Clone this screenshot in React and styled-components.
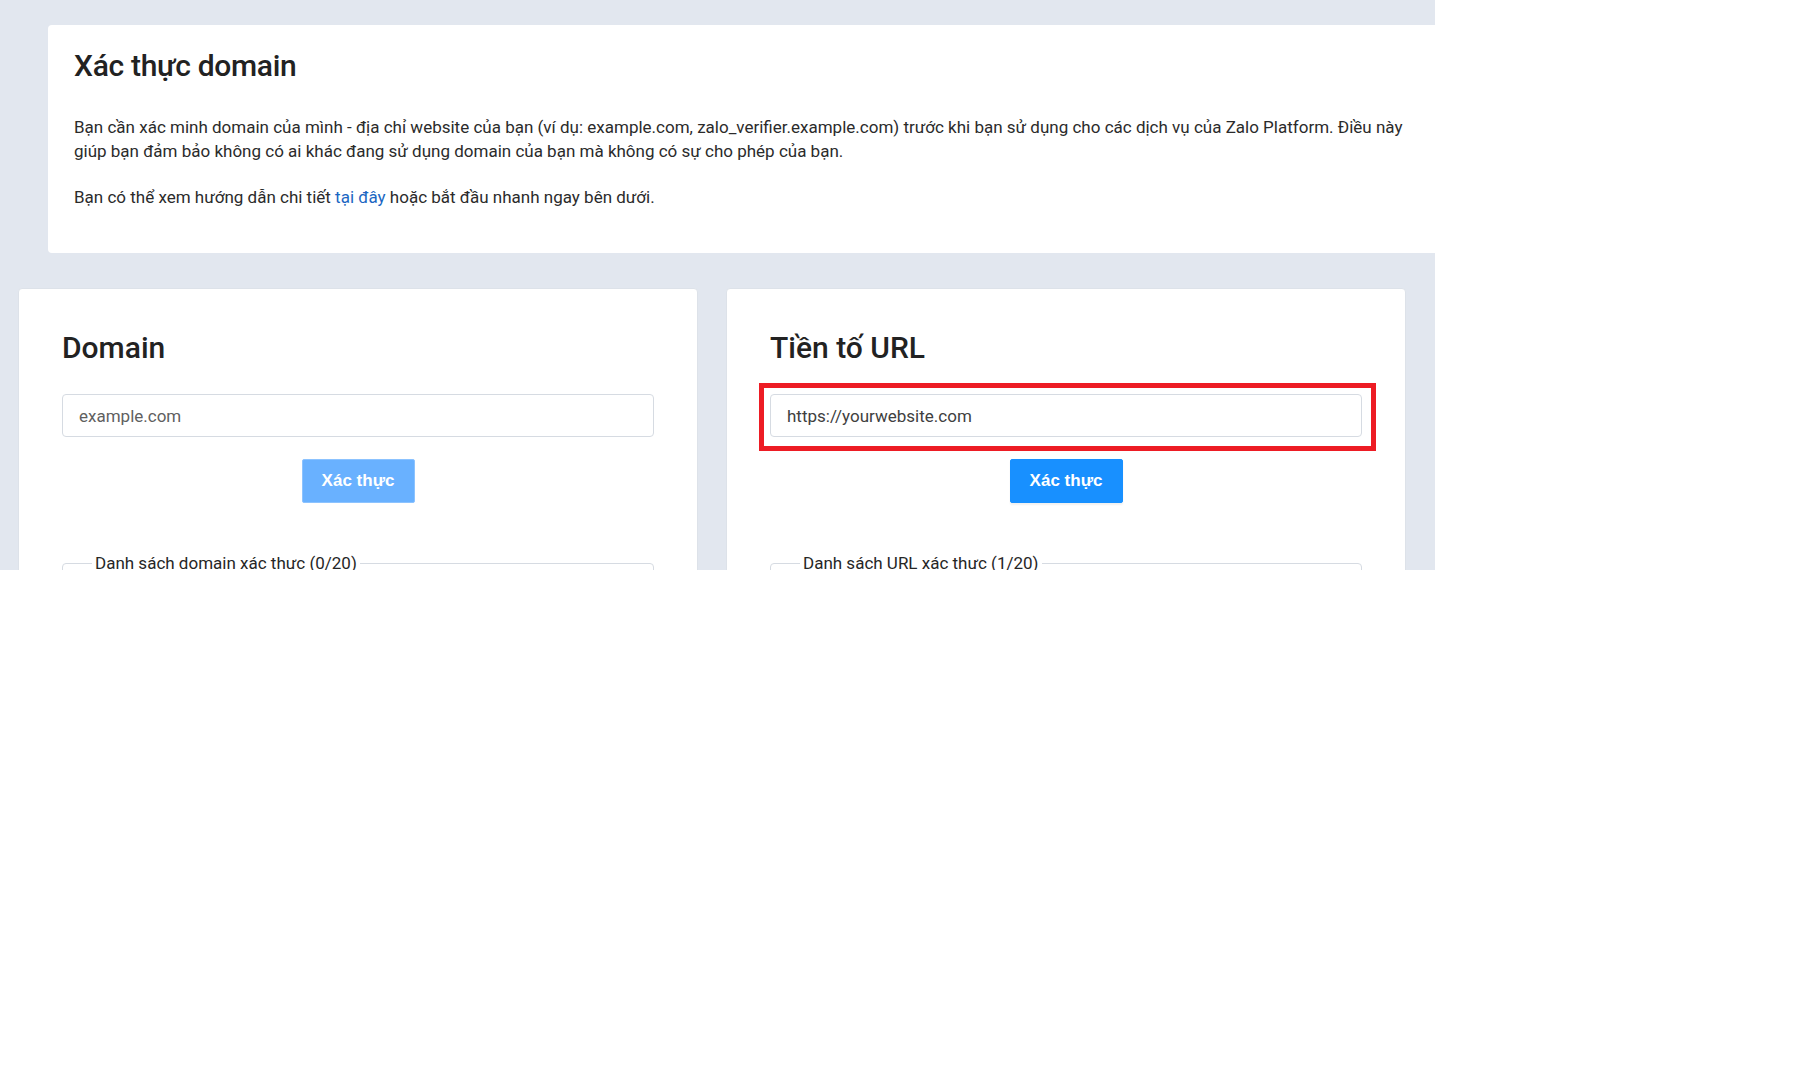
import styled, { createGlobalStyle } from "styled-components";

const GlobalStyle = createGlobalStyle`
    body {
        margin: 0;
        background: #ffffff;
        font-family: Roboto, "Noto Sans", "Liberation Sans", sans-serif;
        color: #262626;
    }
    * {
        box-sizing: border-box;
    }
`;

export default function App() {
    return (
        <>
            <GlobalStyle />
            <Page>
                <IntroCard>
                    <PageTitle>Xác thực domain</PageTitle>
                    <Text>
                        Bạn cần xác minh domain của mình - địa chỉ website của bạn (ví dụ: example.com,
                        zalo_verifier.example.com) trước khi bạn sử dụng cho các dịch vụ của Zalo Platform.
                        Điều này giúp bạn đảm bảo không có ai khác đang sử dụng domain của bạn mà không có sự
                        cho phép của bạn.
                    </Text>
                    <Text $gap>
                        Bạn có thể xem hướng dẫn chi tiết <Link href="#">tại đây</Link> hoặc bắt đầu nhanh
                        ngay bên dưới.
                    </Text>
                </IntroCard>

                <Row>
                    <Card>
                        <CardTitle>Domain</CardTitle>
                        <InputWrap>
                            <Input placeholder="example.com" readOnly />
                        </InputWrap>
                        <ButtonRow>
                            <Button $disabled>Xác thực</Button>
                        </ButtonRow>
                        <ListBox>
                            <Legend>Danh sách domain xác thực (0/20)</Legend>
                        </ListBox>
                    </Card>

                    <Card>
                        <CardTitle>Tiền tố URL</CardTitle>
                        <InputWrap>
                            <Input defaultValue="https://yourwebsite.com" readOnly $filled />
                            <Highlight />
                        </InputWrap>
                        <ButtonRow>
                            <Button>Xác thực</Button>
                        </ButtonRow>
                        <ListBox>
                            <Legend>Danh sách URL xác thực (1/20)</Legend>
                        </ListBox>
                    </Card>
                </Row>
            </Page>
        </>
    );
}

const Page = styled.div`
    width: 1435px;
    height: 570px;
    overflow: hidden;
    background-color: #e2e7ef;
    padding-top: 25px;
`;

const IntroCard = styled.section`
    margin-left: 48px;
    background: #ffffff;
    border-radius: 4px 0 0 4px;
    padding: 22px 26px 44px;
`;

const PageTitle = styled.h1`
    margin: 0;
    font-size: 30px;
    line-height: 38px;
    font-weight: 500;
    letter-spacing: -0.3px;
    color: #222222;
`;

const Text = styled.p`
    margin: ${(p) => (p.$gap ? "22px" : "30px")} 0 0;
    font-size: 17px;
    line-height: 24px;
    color: #2b2b2b;
`;

const Link = styled.a`
    color: #1a66c2;
    text-decoration: none;
`;

const Row = styled.div`
    display: flex;
    gap: 28px;
    margin-top: 35px;
    padding-left: 18px;
`;

const Card = styled.section`
    flex: 0 0 680px;
    background: #ffffff;
    border: 1px solid #dde2e9;
    border-radius: 4px;
    padding: 41px 43px;
    min-height: 400px;
`;

const CardTitle = styled.h2`
    margin: 0;
    font-size: 30px;
    line-height: 36px;
    font-weight: 500;
    color: #222222;
`;

const InputWrap = styled.div`
    position: relative;
    margin-top: 28px;
`;

const Input = styled.input`
    display: block;
    width: 100%;
    height: 43px;
    border: 1px solid #d6dbe2;
    border-radius: 4px;
    padding: 0 16px;
    font-family: Roboto, "Noto Sans", sans-serif;
    font-size: 17px;
    color: ${(p) => (p.$filled ? "#404040" : "#262626")};
    background: #ffffff;
    outline: none;

    &::placeholder {
        color: #5f5f5f;
    }
`;

const Highlight = styled.span`
    position: absolute;
    top: -11px;
    left: -11px;
    right: -14px;
    bottom: -14px;
    border: 5px solid #ed1c24;
    pointer-events: none;
`;

const ButtonRow = styled.div`
    display: flex;
    justify-content: center;
    margin-top: 22px;
`;

const Button = styled.button`
    width: 113px;
    height: 44px;
    border: 1px solid ${(p) => (p.$disabled ? "#8cc3ff" : "#1890ff")};
    border-radius: 2px;
    background-color: ${(p) => (p.$disabled ? "#69b1ff" : "#1890ff")};
    color: #ffffff;
    font-family: "Liberation Sans", Arial, sans-serif;
    font-weight: 700;
    font-size: 17px;
    box-shadow: ${(p) => (p.$disabled ? "none" : "0 2px 2px rgba(0, 0, 0, 0.06)")};
    cursor: pointer;
`;

const ListBox = styled.fieldset`
    margin: 50px 0 0;
    border: 1px solid #d6dbe2;
    border-radius: 4px;
    padding: 0 0 0 29px;
    min-height: 160px;
`;

const Legend = styled.legend`
    padding: 0 3px;
    font-size: 17px;
    line-height: 20px;
    color: #262626;
`;
